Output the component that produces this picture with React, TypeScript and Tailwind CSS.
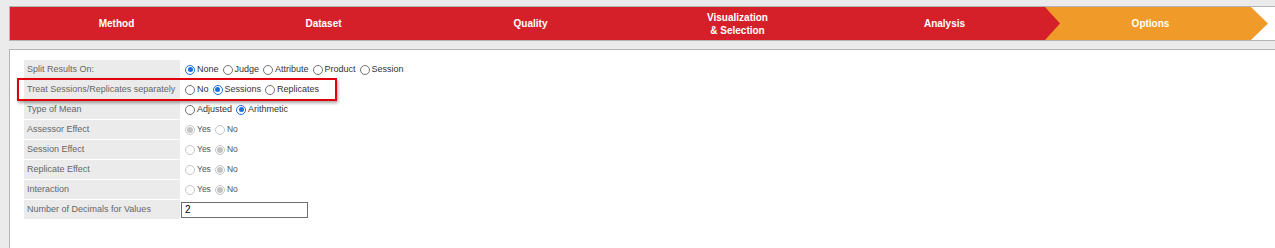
import React from 'react'

type Opt = { label: string; checked?: boolean }

type Row = {
  label: string
  options?: Opt[]
  disabled?: boolean
  input?: string
}

const rows: Row[] = [
  {
    label: 'Split Results On:',
    options: [
      { label: 'None', checked: true },
      { label: 'Judge' },
      { label: 'Attribute' },
      { label: 'Product' },
      { label: 'Session' },
    ],
  },
  {
    label: 'Treat Sessions/Replicates separately',
    options: [{ label: 'No' }, { label: 'Sessions', checked: true }, { label: 'Replicates' }],
  },
  {
    label: 'Type of Mean',
    options: [{ label: 'Adjusted' }, { label: 'Arithmetic', checked: true }],
  },
  {
    label: 'Assessor Effect',
    disabled: true,
    options: [{ label: 'Yes', checked: true }, { label: 'No' }],
  },
  {
    label: 'Session Effect',
    disabled: true,
    options: [{ label: 'Yes' }, { label: 'No', checked: true }],
  },
  {
    label: 'Replicate Effect',
    disabled: true,
    options: [{ label: 'Yes' }, { label: 'No', checked: true }],
  },
  {
    label: 'Interaction',
    disabled: true,
    options: [{ label: 'Yes' }, { label: 'No', checked: true }],
  },
  { label: 'Number of Decimals for Values', input: '2' },
]

const steps = ['Method', 'Dataset', 'Quality', 'Visualization\n& Selection', 'Analysis']

function Radio({ checked, disabled }: { checked?: boolean; disabled?: boolean }) {
  if (disabled) {
    return (
      <span className="flex h-[10px] w-[10px] shrink-0 items-center justify-center rounded-full border border-[#c6c6c6] bg-white">
        {checked && <span className="h-[6px] w-[6px] rounded-full bg-[#c4c4c4]" />}
      </span>
    )
  }
  return checked ? (
    <span className="flex h-[10px] w-[10px] shrink-0 items-center justify-center rounded-full border-[1.5px] border-[#1b6fe0] bg-white">
      <span className="h-[5px] w-[5px] rounded-full bg-[#1b6fe0]" />
    </span>
  ) : (
    <span className="h-[10px] w-[10px] shrink-0 rounded-full border border-[#737373] bg-white" />
  )
}

function App(): JSX.Element {
  return (
    <div className="h-[248px] overflow-hidden bg-[#ebebeb] pt-[6px] pl-[9px] font-['Liberation_Sans',Arial,sans-serif]">
      {/* Step bar */}
      <div className="flex h-[35px] border-y border-l border-[#b4b4b4] bg-white">
        {steps.map((s) => (
          <div
            key={s}
            className="flex w-[207px] shrink-0 items-center justify-center whitespace-pre bg-[#d5202a] pl-[6px] text-center text-[10px] leading-[13px] font-bold text-white"
          >
            {s}
          </div>
        ))}
        <div className="relative flex w-[223px] shrink-0 items-center justify-center bg-[#f09b29] pr-[12px] text-[10px] font-bold text-white [clip-path:polygon(0_0,calc(100%-17px)_0,100%_50%,calc(100%-17px)_100%,0_100%)]">
          {/* red arrow of the previous step */}
          <span className="absolute top-0 left-0 h-full w-[15px] bg-[#d5202a] [clip-path:polygon(0_0,100%_50%,0_100%)]" />
          Options
        </div>
      </div>

      {/* Options panel */}
      <div className="mt-[8px] h-[200px] border-t border-l border-[#b4b4b4] bg-white pt-[10px] pl-[14px]">
        <div className="relative flex flex-col gap-[1px] text-[9px]">
          {rows.map((r) => (
            <div key={r.label} className="flex h-[19px] items-center">
              <div className="flex h-full w-[156px] shrink-0 items-center bg-[#ebebeb] pl-[3px] whitespace-nowrap text-[#666]">
                {r.label}
              </div>
              {r.input ? (
                <div className="ml-[1px] flex h-[16px] w-[127px] items-center border border-[#6e6e6e] pl-[3px] text-[10px] text-black">
                  {r.input}
                </div>
              ) : (
                <div
                  className={
                    'ml-[5px] flex items-center ' +
                    (r.disabled ? 'text-[8.5px] text-[#555]' : 'text-[#333]')
                  }
                >
                  {r.options?.map((o) => (
                    <label key={o.label} className="mr-[4px] flex items-center gap-[2px]">
                      <Radio checked={o.checked} disabled={r.disabled} />
                      {o.label}
                    </label>
                  ))}
                </div>
              )}
            </div>
          ))}
          {/* highlight annotation */}
          <div className="pointer-events-none absolute top-[18px] left-[-7px] h-[23px] w-[320px] border-2 border-[#e0000c] shadow-[1px_2px_3px_rgba(0,0,0,0.35)]" />
        </div>
      </div>
    </div>
  )
}

export default App
